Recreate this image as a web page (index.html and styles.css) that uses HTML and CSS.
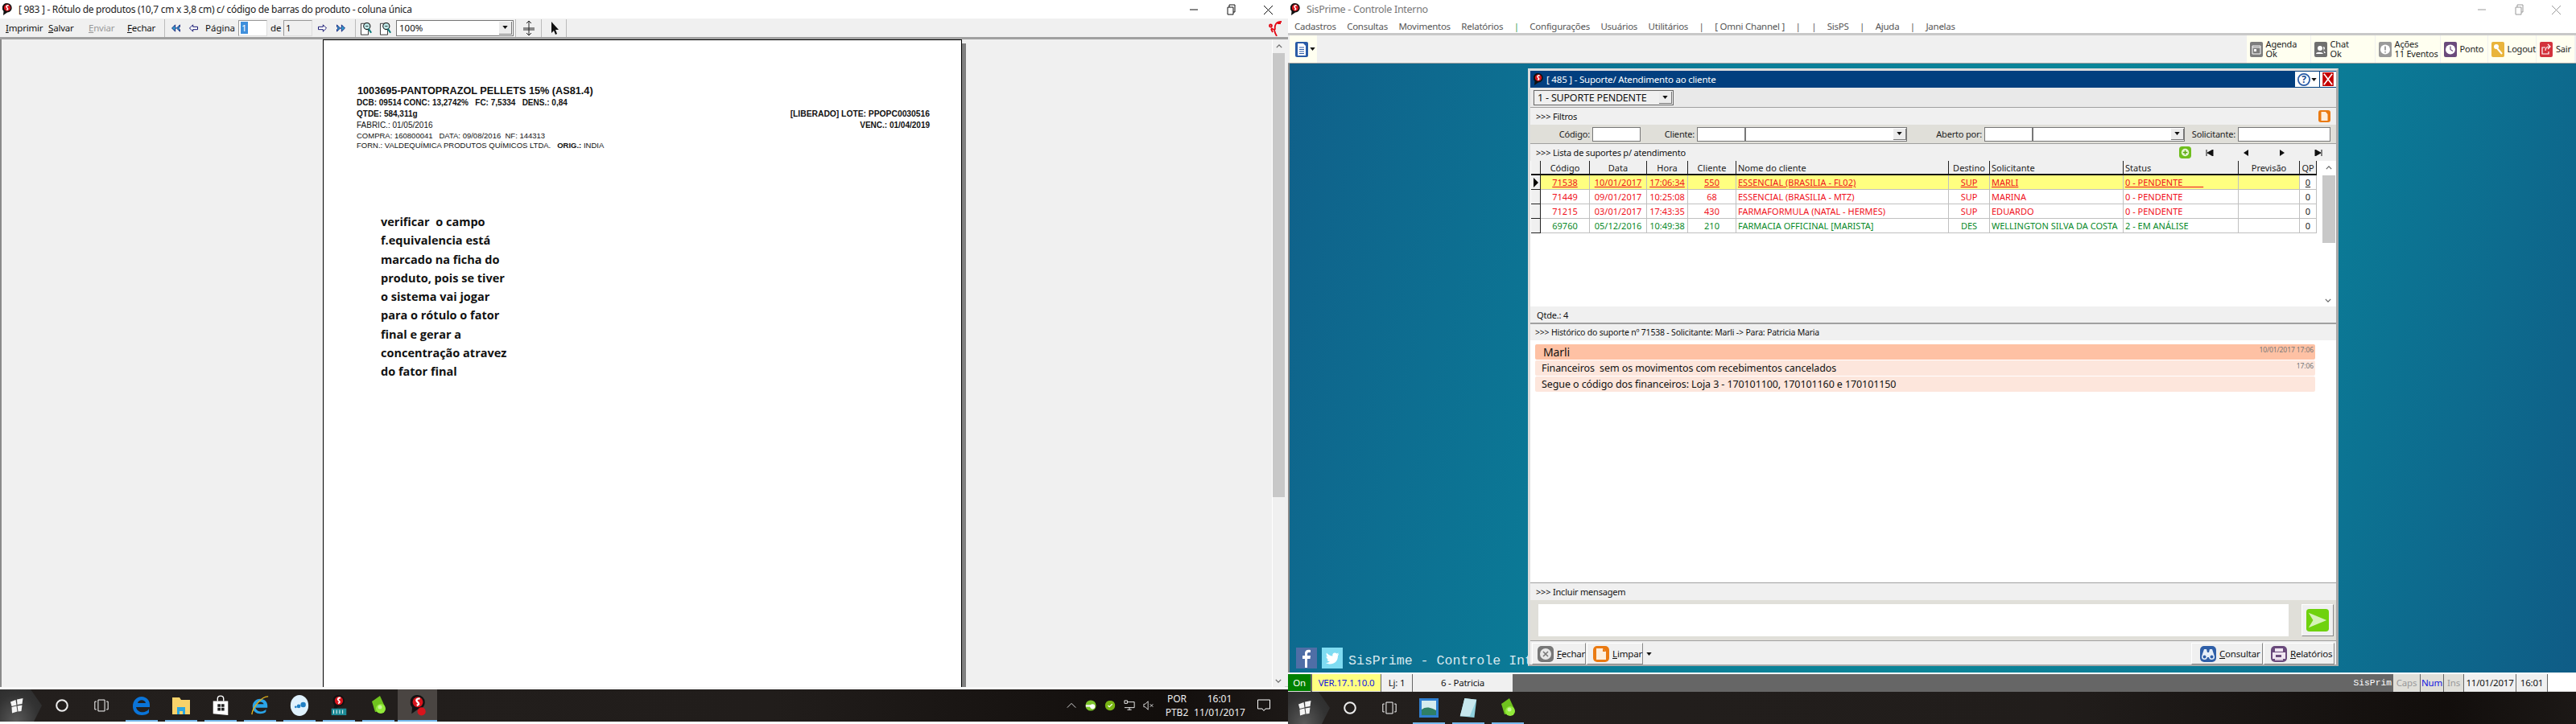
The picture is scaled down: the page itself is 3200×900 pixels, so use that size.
FILE: index.html
```html
<!DOCTYPE html>
<html lang="pt-BR">
<head>
  <meta charset="UTF-8">
  <title>SisPrime - Controle Interno</title>
  <link rel="stylesheet" href="styles.css">
</head>
<body>
  <svg class="sprites" width="0" height="0">
    <symbol id="logo" viewBox="0 0 14 18">
      <path d="M7 0a6.8 6.8 0 0 1 6.8 7c0 4-3 6.600-6.800 6.800L1 18l.6-6A7 7 0 0 1 7 0z" fill="#111"/>
      <circle cx="7" cy="6.800" r="5" fill="#d8141c"/>
      <path d="M9 3.500C6 3 5 5 6.500 6.500S9 9 6 10" fill="none" stroke="#fff" stroke-width="1.800"/>
    </symbol>
    <symbol id="dbl-left" viewBox="0 0 14 12">
      <path d="M6 1 1 6l5 5V8l1-2-1-2zM13 1 8 6l5 5V8l-2-2 2-2z" fill="#39c" stroke="#006" stroke-width=".9"/>
    </symbol>
    <symbol id="one-left" viewBox="0 0 14 12">
      <path d="M6 1 1 6l5 5V8h7V4H6z" fill="#fff" stroke="#006" stroke-width="1.100"/>
    </symbol>
    <symbol id="mag" viewBox="0 0 18 22">
      <path d="M1 4h8l3 3v14H1z" fill="#fff" stroke="#111"/>
      <circle cx="10" cy="8" r="5" fill="#bfe8e8" stroke="#111" stroke-width="1.300"/>
      <path d="M12.500 12l4 6" stroke="#0a7a7a" stroke-width="2.500"/>
      <path d="M8 8h4" stroke="#111"/>
    </symbol>
    <symbol id="tri-down" viewBox="0 0 8 5"><path d="M0 0h8L4 5z" fill="#111"/></symbol>
    <symbol id="win" viewBox="0 0 18 20">
      <path d="M1 5.500 7.500 3l1 6.500-6 1.500zM9 2.500 16.500 1l-1 7-6 1zM2.500 12l6-1.500 1 7L3 19.500zM9.500 10.500l6-1-1 7.500-4 .5z" fill="#f4f4f4"/>
    </symbol>
    <symbol id="cortana" viewBox="0 0 18 18"><circle cx="9" cy="9" r="6.800" fill="none" stroke="#eee" stroke-width="2"/></symbol>
    <symbol id="taskview" viewBox="0 0 22 20">
      <path d="M6 1.500h10v17H6zM3.500 4H1v12h2.500M18.500 4H21v12h-2.500" fill="none" stroke="#fff" stroke-width="1.200"/>
    </symbol>
    <symbol id="stone" viewBox="0 0 20 26">
      <path d="M2 8 12 1l6 13-3 6-9 1z" fill="#6fc21e"/>
      <circle cx="13" cy="17" r="6" fill="#92ea3a"/>
      <circle cx="12" cy="15" r="2.500" fill="#c8f59a"/>
    </symbol>
  </svg>

  <main class="desk">

    <section class="screen">
      <header class="titlebar">
        <svg class="title-logo"><use href="#logo"/></svg>
        <span class="title-text">[ 983 ] - Rótulo de produtos (10,7 cm x 3,8 cm) c/ código de barras do produto - coluna única</span>
        <div class="win-ctrl">
          <svg viewBox="0 0 46 20"><path d="M18 10h10" stroke="#111"/></svg>
          <svg viewBox="0 0 46 20"><path d="M19 7h7v9h-7zM21 7V4h7v9h-2" fill="none" stroke="#111"/></svg>
          <svg viewBox="0 0 46 20"><path d="M18 5l11 11M29 5 18 16" stroke="#111"/></svg>
        </div>
      </header>

      <div class="preview-tools">
        <span class="tool-btn first"><u>I</u>mprimir</span>
        <span class="tool-btn"><u>S</u>alvar</span>
        <span class="tool-btn off"><u>E</u>nviar</span>
        <span class="tool-btn"><u>F</u>echar</span>
        <i class="tool-sep"></i>
        <svg class="ico"><use href="#dbl-left"/></svg>
        <svg class="ico"><use href="#one-left"/></svg>
        <span class="page-label">Página</span>
        <span class="page-input"><b class="sel">1</b></span>
        <span class="page-label">de</span>
        <span class="page-input gray">1</span>
        <svg class="ico flip"><use href="#one-left"/></svg>
        <svg class="ico flip"><use href="#dbl-left"/></svg>
        <i class="tool-sep end"></i>
        <svg class="ico-mag"><use href="#mag"/></svg>
        <svg class="ico-mag"><use href="#mag"/></svg>
        <span class="zoom-select">100%<span class="drop-btn"><svg class="tri"><use href="#tri-down"/></svg></span></span>
        <i class="tool-sep"></i>
        <svg class="ico-tall" viewBox="0 0 16 20"><path d="M8 1v18M1 10h14M1 12h14M5 4l3-3 3 3M5 16l3 3 3-3" fill="none" stroke="#222"/></svg>
        <i class="tool-sep"></i>
        <svg class="ico-tall" viewBox="0 0 16 20"><path d="M4 2v14l3-3 2 5 2-1-2-5h4z" fill="#111"/></svg>
        <i class="tool-sep"></i>
        <svg class="ico-fig" viewBox="0 0 18 20"><path d="M1 7a1.500 1.500 0 1 1 3 0 1.500 1.500 0 1 1-3 0zM3 10l4 2 1 4 2 4M8 12c-1-6 1-10 8-10M11 4h4M3 11l2 4" fill="none" stroke="#e30613" stroke-width="1.800"/></svg>
      </div>

      <div class="preview-body">
        <div class="gutter"></div>
        <article class="sheet">
          <h1 class="lbl-title">1003695-PANTOPRAZOL PELLETS 15% (AS81.4)</h1>
          <div class="lbl-row strong">DCB: 09514 CONC: 13,2742%   FC: 7,5334   DENS.: 0,84</div>
          <div class="lbl-row strong split"><span>QTDE: 584,311g</span><span class="lote">[LIBERADO] LOTE: PPOPC0030516</span></div>
          <div class="lbl-row split"><span>FABRIC.: 01/05/2016</span><b>VENC.: 01/04/2019</b></div>
          <div class="lbl-row small">COMPRA: 160800041   DATA: 09/08/2016  NF: 144313</div>
          <div class="lbl-row small">FORN.: VALDEQUÍMICA PRODUTOS QUÍMICOS LTDA.   <b>ORIG.:</b> INDIA</div>
          <p class="note">verificar  o campo<br>f.equivalencia está<br>marcado na ficha do<br>produto, pois se tiver<br>o sistema vai jogar<br>para o rótulo o fator<br>final e gerar a<br>concentração atravez<br>do fator final</p>
        </article>
        <div class="sheet-shadow"></div>
        <div class="gutter wide"></div>
        <div class="vscroll">
          <svg class="chev" viewBox="0 0 10 6"><path d="M1 5l4-4 4 4" fill="none" stroke="#666" stroke-width="1.500"/></svg>
          <div class="vthumb"></div>
          <svg class="chev bottom" viewBox="0 0 10 6"><path d="M1 1l4 4 4-4" fill="none" stroke="#666" stroke-width="1.500"/></svg>
        </div>
      </div>

      <footer class="taskbar main-bar">
        <div class="start"><svg class="start-logo"><use href="#win"/></svg></div>
        <div class="task sys"><svg class="sys-ico"><use href="#cortana"/></svg></div>
        <div class="task sys wide-sys"><svg class="sys-ico"><use href="#taskview"/></svg></div>
        <div class="task"><svg class="app" viewBox="0 0 24 26"><path d="M21 17c-2 5-14 7-16-2h17c1-8-4-13-10-13C5 2 1 8 1 14c0 8 6 11 11 11 4 0 7-1 9-3zM7 10c1-5 9-5 10 0z" fill="#0a74d8"/></svg></div>
        <div class="task"><svg class="app" viewBox="0 0 24 26"><path d="M1 3h9l2 3h11v18H1z" fill="#f7d26a"/><path d="M7 15h10v9h-3v-4h-4v4H7z" fill="#2aa6e0"/></svg></div>
        <div class="task"><svg class="app" viewBox="0 0 24 28"><path d="M8 8V5c0-5 8-5 8 0v3" fill="none" stroke="#fff" stroke-width="1.500"/><path d="M2 8h20v19l-20-2z" fill="#fff"/><path d="M8 12h4v4H8zM13 12h4v4h-4zM8 17h4v4H8zM13 17h4v4h-4z" fill="#222"/></svg></div>
        <div class="task"><svg class="app" viewBox="0 0 26 28"><path d="M21 19c-2 4-12 5-14-2h16c1-8-4-12-10-12C7 5 3 10 3 15c0 7 5 10 10 10 4 0 7-1 8-3zM8 12c1-4 9-4 10 0z" fill="#2aa4e8"/><path d="M24 2C16 1 3 16 2 26" fill="none" stroke="#e3b21c" stroke-width="1.500"/></svg></div>
        <div class="task"><svg class="app" viewBox="0 0 24 28"><ellipse cx="12" cy="14" rx="12" ry="14" fill="#dff1fd"/><circle cx="7" cy="16" r="1.500" fill="#1f7fc4"/><circle cx="11" cy="15" r="2.500" fill="#1f7fc4"/><circle cx="17" cy="13" r="3.500" fill="#1f7fc4"/></svg></div>
        <div class="task"><svg class="app" viewBox="0 0 24 28"><use href="#logo" width="16" height="20" x="4" y="0"/><rect x="2" y="18" width="20" height="9" fill="#1c8a96"/><path d="M5 20v5M9 20v5M13 20v5M17 20v5" stroke="#fff"/></svg></div>
        <div class="task"><svg class="app"><use href="#stone"/></svg></div>
        <div class="task active"><svg class="app" viewBox="0 0 24 28"><use href="#logo" width="20" height="25" x="2" y="0"/><circle cx="17" cy="22" r="5.500" fill="#d8141c"/></svg></div>
        <div class="tray">
          <svg class="tray-ico" viewBox="0 0 16 16"><path d="M2 11l6-6 6 6" fill="none" stroke="#eee"/></svg>
          <svg class="tray-ico" viewBox="0 0 16 16"><circle cx="8" cy="8" r="7.500" fill="#7cc42a"/><path d="M1 7h9v3H1z" fill="#eee"/><circle cx="10.500" cy="9.500" r="3.500" fill="#fff"/></svg>
          <svg class="tray-ico" viewBox="0 0 16 16"><path d="M8 1c5 0 7 3 7 7s-3 7-7 7-7-3-7-7 2-7 7-7z" fill="#78b414"/><path d="M5 8l2 2 4-4" fill="none" stroke="#fff" stroke-width="1.300"/></svg>
          <svg class="tray-ico" viewBox="0 0 16 16"><path d="M5 3h10v8H1M8 11v3M5 14h6M1 1h4v4H1z" fill="none" stroke="#fff"/></svg>
          <svg class="tray-ico" viewBox="0 0 16 16"><path d="M1 6h2l4-4v12l-4-4H1zM10 6l4 4M14 6l-4 4" fill="none" stroke="#eee"/></svg>
          <div class="tray-lang">POR<br>PTB2</div>
          <div class="tray-clock">16:01<br>11/01/2017</div>
          <svg class="tray-note" viewBox="0 0 16 16"><path d="M.5 1h15v11H10l-2 2.500L6 12H.5z" fill="none" stroke="#fff"/></svg>
        </div>
      </footer>
    </section>

    <section class="screen">
      <header class="titlebar">
        <svg class="title-logo"><use href="#logo"/></svg>
        <span class="title-text dim">SisPrime - Controle Interno</span>
        <div class="win-ctrl dim-ctrl">
          <svg viewBox="0 0 46 20"><path d="M18 10h10" stroke="#999"/></svg>
          <svg viewBox="0 0 46 20"><path d="M19 7h7v9h-7zM21 7V4h7v9h-2" fill="none" stroke="#999"/></svg>
          <svg viewBox="0 0 46 20"><path d="M18 5l11 11M29 5 18 16" stroke="#999"/></svg>
        </div>
      </header>
      <nav class="menubar">
        <span>Cadastros</span><span>Consultas</span><span>Movimentos</span><span>Relatórios</span><span class="green">|</span><span>Configurações</span><span>Usuários</span><span>Utilitários</span><span>|</span><span>[ Omni Channel ]</span><span>|</span><span>|</span><span>SisPS</span><span>|</span><span>Ajuda</span><span>|</span><span>Janelas</span>
      </nav>
      <div class="quickbar">
        <div class="doc-btn">
          <svg class="doc-ico" viewBox="0 0 16 19"><rect width="16" height="19" rx="2" fill="#2a5ba6"/><path d="M3 2h7l3 3v12H3z" fill="#fff"/><path d="M5 7h6M5 9.500h6M5 12h6M5 14.500h6" stroke="#2a5ba6"/></svg>
          <svg class="tri"><use href="#tri-down"/></svg>
        </div>
        <div class="quick agenda">
          <svg class="metro" viewBox="0 0 16 19"><rect width="16" height="19" rx="2" fill="#7d7d7d"/><path d="M3 5h10v10H3zM3 7h10" fill="none" stroke="#fff"/><path d="M5 9h3v3H5z" fill="#fff"/></svg>
          <span>Agenda<br>Ok</span>
        </div>
        <div class="quick chat">
          <svg class="metro" viewBox="0 0 16 19"><rect width="16" height="19" rx="2" fill="#6f6f6f"/><circle cx="7" cy="8" r="3" fill="#fff"/><path d="M2 15c0-3 8-3 9 0zM11 6a2 2 0 0 1 0 4l3 4h-2z" fill="#fff"/></svg>
          <span>Chat<br>Ok</span>
        </div>
        <div class="quick acoes">
          <svg class="metro" viewBox="0 0 16 19"><rect width="16" height="19" rx="2" fill="#9a9a9a"/><circle cx="8" cy="9.500" r="6" fill="#fff"/><path d="M8 5.500v5M8 12v1.500" stroke="#9a9a9a" stroke-width="1.800"/></svg>
          <span>Ações<br>11 Eventos</span>
        </div>
        <div class="quick ponto">
          <svg class="metro" viewBox="0 0 16 19"><rect width="16" height="19" rx="2" fill="#6a4a7c"/><circle cx="8" cy="9.500" r="6" fill="#fff"/><path d="M8 5.500v4l3 2" fill="none" stroke="#6a4a7c" stroke-width="1.200"/></svg>
          <span>Ponto</span>
        </div>
        <div class="quick logout">
          <svg class="metro" viewBox="0 0 16 19"><rect width="16" height="19" rx="2" fill="#e9b43c"/><circle cx="6" cy="6" r="3" fill="#fff"/><path d="M7 8l6 7" stroke="#fff" stroke-width="2"/></svg>
          <span>Logout</span>
        </div>
        <div class="quick sair">
          <svg class="metro" viewBox="0 0 16 19"><rect width="16" height="19" rx="2" fill="#d3333c"/><path d="M11 12v3H3V7h4M7 11c0-3 2-5 5-5M10 3l3 3-3 3" fill="none" stroke="#fff" stroke-width="1.200"/></svg>
          <span>Sair</span>
        </div>
      </div>

      <div class="workspace">
        <div class="social">
          <svg class="soc" viewBox="0 0 26 26"><rect width="26" height="26" fill="#4f6ea6"/><path d="M11 25V14H8v-4h3V7c0-3 2-5 7-4v3h-2c-1 0-2 .5-2 2v2h4l-.5 4H14v11z" fill="#fff"/></svg>
          <svg class="soc" viewBox="0 0 26 26"><rect width="26" height="26" fill="#7fdcf2"/><path d="M21 8c-1 .5-1.500.5-2 .5 1-.5 1.500-1 2-2-1 .5-1.500.7-2.500 1-2-2-6-.5-5 3-3 0-6-2-7.500-4-1 2 0 4 1.500 5-.7 0-1.200-.2-2-.5 0 2 1.500 3.500 3 4h-2c.5 1.500 2 2.500 3.500 2.500C8 18.500 6.500 19 5 19c6 3.500 15 1 15-9 .5-.5 1-1 1-2z" fill="#fff"/></svg>
          <span class="marquee">SisPrime - Controle Interno</span>
        </div>

        <section class="support">
          <div class="sup-title">
            <svg class="sup-logo"><use href="#logo"/></svg>
            <span>[ 485 ] - Suporte/ Atendimento ao cliente</span>
            <div class="sup-help">
              <svg class="help-ico" viewBox="0 0 18 18"><circle cx="9" cy="9" r="8" fill="#fff" stroke="#2a5ba6" stroke-width="2"/></svg>
              <b class="help-mark">?</b>
              <svg class="tri"><use href="#tri-down"/></svg>
            </div>
            <div class="sup-close"><svg viewBox="0 0 16 20"><rect width="16" height="20" fill="#c40000"/><path d="M2 2l12 16M14 2 2 18" stroke="#fff" stroke-width="2"/></svg></div>
          </div>

          <div class="combo-row">
            <div class="status-combo">1 - SUPORTE PENDENTE<span class="drop-btn"><svg class="tri"><use href="#tri-down"/></svg></span></div>
          </div>

          <div class="caption rule">
            <span>&gt;&gt;&gt; Filtros</span>
            <svg class="clip" viewBox="0 0 15 15"><rect width="15" height="15" rx="3" fill="#ea7a12"/><path d="M3.500 2H9l2.500 3v8h-8z" fill="#fdeedd"/></svg>
          </div>
          <div class="filters">
            <label>Código:</label><span class="field"></span>
            <label>Cliente:</label><span class="field"></span><span class="field drop"><span class="drop-btn"><svg class="tri"><use href="#tri-down"/></svg></span></span>
            <label>Aberto por:</label><span class="field"></span><span class="field drop"><span class="drop-btn"><svg class="tri"><use href="#tri-down"/></svg></span></span>
            <label>Solicitante:</label><span class="field"></span>
          </div>
          <div class="caption list-cap">
            <span>&gt;&gt;&gt; Lista de suportes p/ atendimento</span>
            <div class="pager">
              <svg class="plus" viewBox="0 0 16 16"><rect width="16" height="16" rx="4" fill="#6fbe1e"/><circle cx="8" cy="8" r="5" fill="#e8f6d8"/><path d="M8 5v6M5 8h6" stroke="#5aa510" stroke-width="1.500"/></svg>
              <svg class="nav" viewBox="0 0 10 8"><path d="M1 0v8M9 0v8L2 4z" stroke="#111" fill="#111"/></svg>
              <svg class="nav" viewBox="0 0 10 8"><path d="M8 0v8L2 4z" fill="#111"/></svg>
              <svg class="nav" viewBox="0 0 10 8"><path d="M2 0v8l6-4z" fill="#111"/></svg>
              <svg class="nav" viewBox="0 0 10 8"><path d="M9 0v8M1 0v8l7-4z" stroke="#111" fill="#111"/></svg>
            </div>
          </div>

          <div class="grid-wrap">
            <table class="grid">
              <colgroup>
                <col class="c-ind"><col class="c-cod"><col class="c-data"><col class="c-hora"><col class="c-cli"><col class="c-nome"><col class="c-dest"><col class="c-sol"><col class="c-stat"><col class="c-prev"><col class="c-qp">
              </colgroup>
              <thead>
                <tr><th></th><th>Código</th><th>Data</th><th>Hora</th><th>Cliente</th><th class="lft">Nome do cliente</th><th>Destino</th><th class="lft">Solicitante</th><th class="lft">Status</th><th>Previsão</th><th>QP</th></tr>
              </thead>
              <tbody>
                <tr class="red cur"><td class="ind"><span class="marker"></span></td><td><u>71538</u></td><td><u>10/01/2017</u></td><td><u>17:06:34</u></td><td><u>550</u></td><td class="lft"><u>ESSENCIAL (BRASILIA - FL02)</u></td><td><u>SUP</u></td><td class="lft"><u>MARLI</u></td><td class="lft"><u>0 - PENDENTE&nbsp;&nbsp;&nbsp;&nbsp;&nbsp;&nbsp;&nbsp;&nbsp;&nbsp;</u></td><td></td><td class="qp"><u>0</u></td></tr>
                <tr class="red"><td class="ind"></td><td>71449</td><td>09/01/2017</td><td>10:25:08</td><td>68</td><td class="lft">ESSENCIAL (BRASILIA - MTZ)</td><td>SUP</td><td class="lft">MARINA</td><td class="lft">0 - PENDENTE</td><td></td><td class="qp">0</td></tr>
                <tr class="red"><td class="ind"></td><td>71215</td><td>03/01/2017</td><td>17:43:35</td><td>430</td><td class="lft">FARMAFORMULA (NATAL - HERMES)</td><td>SUP</td><td class="lft">EDUARDO</td><td class="lft">0 - PENDENTE</td><td></td><td class="qp">0</td></tr>
                <tr class="grn"><td class="ind"></td><td>69760</td><td>05/12/2016</td><td>10:49:38</td><td>210</td><td class="lft">FARMACIA OFFICINAL [MARISTA]</td><td>DES</td><td class="lft">WELLINGTON SILVA DA COSTA</td><td class="lft">2 - EM ANÁLISE</td><td></td><td class="qp">0</td></tr>
              </tbody>
            </table>
            <div class="grid-scroll">
              <svg class="chev" viewBox="0 0 10 6"><path d="M1 5l4-4 4 4" fill="none" stroke="#666" stroke-width="1.500"/></svg>
              <div class="grid-thumb"></div>
              <svg class="chev bottom" viewBox="0 0 10 6"><path d="M1 1l4 4 4-4" fill="none" stroke="#666" stroke-width="1.500"/></svg>
            </div>
          </div>
          <div class="qtde">Qtde.: 4</div>

          <div class="caption hist-cap">&gt;&gt;&gt; Histórico do suporte nº 71538 - Solicitante: Marli -&gt; Para: Patricia Maria</div>
          <div class="history">
            <div class="bubble head"><span>Marli</span><time>10/01/2017 17:06</time></div>
            <div class="bubble"><span>Financeiros  sem os movimentos com recebimentos cancelados</span><time>17:06</time></div>
            <div class="bubble"><span>Segue o código dos financeiros: Loja 3 - 170101100, 170101160 e 170101150</span></div>
          </div>

          <div class="caption inc-cap">&gt;&gt;&gt; Incluir mensagem</div>
          <div class="compose">
            <div class="compose-box"></div>
            <div class="send"><svg viewBox="0 0 30 30"><rect width="30" height="30" rx="4" fill="#6fd20e"/><path d="M3 5l24 10-24 10 6-10z" fill="#d5f2b8"/></svg></div>
          </div>
          <div class="actions">
            <div class="act fechar">
              <svg class="act-ico" viewBox="0 0 20 20"><rect width="20" height="20" rx="5" fill="#777"/><circle cx="10" cy="10" r="7" fill="#e8e8e8"/><path d="M7 7l6 6M13 7l-6 6" stroke="#777" stroke-width="1.500"/></svg>
              <span><u>F</u>echar</span>
            </div>
            <div class="act limpar">
              <svg class="act-ico" viewBox="0 0 20 20"><rect width="20" height="20" rx="5" fill="#ea7a12"/><path d="M4 3h8l4 4v10H4z" fill="#fdeedd"/><path d="M12 3v4h4z" fill="#ea7a12"/></svg>
              <span><u>L</u>impar</span>
            </div>
            <div class="act-drop"><svg class="tri"><use href="#tri-down"/></svg></div>
            <div class="act-gap"></div>
            <div class="act consultar">
              <svg class="act-ico" viewBox="0 0 20 20"><rect width="20" height="20" rx="5" fill="#2f5fa8"/><path d="M5 4h3l1 4h2l1-4h3l3 9a3.500 3.500 0 0 1-7 1H9a3.500 3.500 0 0 1-7-1z" fill="#e6eef8"/><circle cx="5.500" cy="13.500" r="2" fill="#2f5fa8"/><circle cx="14.500" cy="13.500" r="2" fill="#2f5fa8"/></svg>
              <span><u>C</u>onsultar</span>
            </div>
            <div class="act relatorios">
              <svg class="act-ico" viewBox="0 0 20 20"><rect width="20" height="20" rx="5" fill="#6a4a7c"/><path d="M5 3h10v4H5zM2 8h16v8H2z" fill="#f0e6f2"/><path d="M6 11h7v3H6z" fill="#6a4a7c"/><path d="M5 16h10v2H5z" fill="#d9c8dd"/></svg>
              <span><u>R</u>elatórios</span>
            </div>
          </div>
        </section>
      </div>

      <div class="statusbar">
        <span class="st st-on">On</span>
        <span class="st st-ver">VER.17.1.10.0</span>
        <span class="st st-lj">Lj: 1</span>
        <span class="st st-user">6 - Patricia</span>
        <span class="st-brand"><span>SisPrim</span></span>
        <span class="st st-key off">Caps</span>
        <span class="st st-num">Num</span>
        <span class="st st-ins off">Ins</span>
        <span class="st st-date">11/01/2017</span>
        <span class="st st-time">16:01</span>
        <span class="st st-blank"></span>
      </div>

      <footer class="taskbar">
        <div class="start"><svg class="start-logo"><use href="#win"/></svg></div>
        <div class="task sys"><svg class="sys-ico"><use href="#cortana"/></svg></div>
        <div class="task sys"><svg class="sys-ico"><use href="#taskview"/></svg></div>
        <div class="task"><svg class="app" viewBox="0 0 24 24"><rect width="24" height="24" fill="#2f7fd0"/><rect x="3" y="3" width="18" height="18" fill="#d5ecef"/><path d="M3 14c5-4 11-3 18 1v6H3z" fill="#2f7f66"/></svg></div>
        <div class="task"><svg class="app" viewBox="0 0 24 28"><path d="M7 1l16 2-3 24L1 25z" fill="#8fd0dd"/><path d="M7 1l16 2-9 22-13 0z" fill="#c8e8ee"/></svg></div>
        <div class="task"><svg class="app"><use href="#stone"/></svg></div>
      </footer>
    </section>

  </main>
</body>
</html>
```

FILE: styles.css
```css
* {
  box-sizing: border-box;
}
html, body {
  margin: 0;
  padding: 0;
}
body {
  width: 3200px;
  height: 900px;
  overflow: hidden;
  background: #201c1a;
  font-family: "Noto Sans", "Liberation Sans", sans-serif;
  font-size: 11px;
  color: #111;
}
.sprites {
  position: absolute;
}
.desk {
  display: flex;
  width: 3200px;
  height: 900px;
}
.screen {
  display: flex;
  flex-direction: column;
  width: 1600px;
  height: 900px;
  background: #fff;
}

/* window title */
.titlebar {
  display: flex;
  align-items: center;
  flex: 0 0 23px;
  padding-left: 3px;
  background: #fff;
}
.title-logo {
  width: 12px;
  height: 15px;
}
.title-text {
  margin-left: 8px;
  font-size: 12px;
  letter-spacing: -0.3px;
  color: #222;
}
.title-text.dim {
  color: #777;
  font-size: 12.500px;
}
.win-ctrl {
  display: flex;
  margin-left: auto;
  padding-right: 2px;
}
.win-ctrl svg {
  width: 46px;
  height: 20px;
}

/* report preview toolbar */
.preview-tools {
  display: grid;
  grid-template-columns: 60px 50px 48px 46px 2px 24px 21px 45px 36px 20px 36px 24px 22px 8px 26px 22px 150px 2px 30px 2px 29px 2px 1fr;
  align-items: center;
  flex: 0 0 23px;
  background: #f0f0f0;
}
.tool-btn {
  font-size: 11.500px;
  letter-spacing: -0.2px;
}
.tool-btn.first {
  padding-left: 7px;
}
.tool-btn.off {
  color: #999;
}
.tool-sep {
  width: 1px;
  height: 22px;
  background: #bbb;
}
.tool-sep.end {
  justify-self: end;
}
.ico {
  width: 13px;
  height: 10px;
  justify-self: center;
}
.ico.flip {
  transform: scaleX(-1);
}
.ico-mag {
  width: 16px;
  height: 18px;
  justify-self: center;
}
.ico-tall {
  width: 16px;
  height: 20px;
  justify-self: center;
}
.ico-fig {
  justify-self: end;
  width: 18px;
  height: 20px;
  margin-right: 6px;
}
.page-label {
  padding-left: 4px;
  font-size: 11.500px;
}
.page-input {
  display: flex;
  align-items: center;
  height: 20px;
  padding-left: 2px;
  background: #fff;
  border: 1px solid #999;
  border-right-color: #ddd;
  border-bottom-color: #ddd;
  font-size: 11.500px;
}
.page-input.gray {
  background: #f0f0f0;
}
.sel {
  padding: 0 1px;
  background: #3f8fdc;
  color: #fff;
  font-weight: 400;
}
.zoom-select {
  position: relative;
  display: flex;
  align-items: center;
  width: 146px;
  height: 20px;
  margin-left: 2px;
  padding-left: 3px;
  background: #fff;
  border: 1px solid #777;
  font-size: 11.500px;
}
.drop-btn {
  position: absolute;
  top: 1px;
  right: 1px;
  bottom: 1px;
  display: flex;
  align-items: center;
  justify-content: center;
  width: 16px;
  background: #ececec;
  border-right: 1px solid #777;
  border-bottom: 1px solid #777;
}
.tri {
  width: 7px;
  height: 4px;
}

/* report sheet */
.preview-body {
  display: flex;
  flex: 0 0 811px;
  background: #f0f0f0;
  border-top: 3px solid #a0a0a0;
  border-bottom: 3px solid #f8f8f8;
  box-shadow: inset 0 -1px 0 #ccc;
}
.gutter {
  flex: 0 0 401px;
  background: #f0f0f0;
  border-left: 2px solid #8a8a8a;
}
.gutter.wide {
  flex: 0 0 380px;
  border-left: 0;
}
.sheet {
  flex: 0 0 794px;
  padding: 55px 39px 0 41px;
  background: #fff;
  border-top: 1px solid #000;
  border-left: 1px solid #000;
  border-right: 1px solid #000;
  font-family: "Liberation Sans", Arial, sans-serif;
  color: #111;
}
.sheet-shadow {
  flex: 0 0 5px;
  margin-top: 5px;
  background: #808080;
}
.lbl-title {
  margin: 0 0 0 1px;
  height: 16px;
  font-size: 12.700px;
  line-height: 16px;
  font-weight: 700;
}
.lbl-row {
  height: 14px;
  font-size: 10px;
  line-height: 14px;
  white-space: pre;
}
.lbl-row.strong {
  font-weight: 700;
}
.lbl-row.small {
  height: 12px;
  font-size: 9.500px;
  line-height: 12px;
}
.lote {
  font-size: 10.300px;
}
.split {
  display: flex;
  justify-content: space-between;
}
.note {
  margin: 77px 0 0 30px;
  font-family: "Open Sans", sans-serif;
  font-size: 14.500px;
  font-weight: 700;
  line-height: 23.300px;
  white-space: pre;
  color: #111;
}
.vscroll {
  position: relative;
  flex: 0 0 16px;
  background: #f0f0f0;
  border-left: 1px solid #fff;
}
.chev {
  display: block;
  width: 8px;
  height: 5px;
  margin: 6px auto 0;
}
.chev.bottom {
  position: absolute;
  left: 3px;
  bottom: 5px;
  margin: 0;
}
.vthumb {
  height: 552px;
  margin-top: 6px;
  background: #c8c8c8;
}

/* taskbar */
.taskbar {
  display: flex;
  flex: 0 0 40px;
  background: linear-gradient(90deg, #231f1d 0%, #211d1b 60%, #120e0c 90%, #1c1816 100%);
}
.start {
  flex: 0 0 52px;
  display: flex;
  align-items: center;
  justify-content: center;
  padding-right: 10px;
  background: radial-gradient(ellipse at 20px 40px, #5a5a5a, #333 60%, #2a2a2a);
  clip-path: polygon(0 0, 38px 0, 52px 50%, 42px 100%, 0 100%);
}
.start-logo {
  width: 18px;
  height: 20px;
}
.task {
  position: relative;
  display: flex;
  align-items: center;
  justify-content: center;
  flex: 0 0 49px;
}
.task::after {
  content: "";
  position: absolute;
  left: 5px;
  right: 4px;
  bottom: 0;
  height: 2px;
  background: #76b9ed;
}
.task.sys {
  flex: 0 0 49px;
}
.task.sys::after {
  display: none;
}
.wide-sys {
  margin-right: 1px;
}
.task.active {
  background: #4a4542;
}
.task.active::after {
  left: 0;
  right: 0;
}
.sys-ico {
  width: 18px;
  height: 20px;
}
.app {
  width: 24px;
  height: 26px;
}
.tray {
  display: flex;
  align-items: center;
  margin-left: 776px;
  color: #eee;
  font-size: 12px;
}
.tray-ico {
  flex: 0 0 14px;
  width: 14px;
  height: 14px;
  margin: 0 5px;
}
.tray-lang {
  flex: 0 0 36px;
  margin-left: 5px;
  text-align: center;
  line-height: 17px;
}
.tray-clock {
  flex: 0 0 66px;
  margin-left: 2px;
  text-align: center;
  line-height: 17px;
}
.tray-note {
  width: 16px;
  height: 16px;
  margin-left: 14px;
}

/* main app menus */
.menubar {
  display: flex;
  align-items: center;
  gap: 13.500px;
  flex: 0 0 18px;
  padding-left: 8px;
  background: #fff;
  font-size: 11.500px;
  letter-spacing: -0.25px;
  color: #555;
}
.menubar .green {
  color: #3a9a5a;
}
.quickbar {
  display: flex;
  flex: 0 0 38px;
  gap: 1px;
  padding: 0 2px 0 2px;
  background: #f0f0f0;
  border-top: 3px solid #c8c8c8;
  border-bottom: 1px solid #a0a0a0;
}
.doc-btn {
  display: flex;
  align-items: center;
  gap: 2px;
  flex: 0 0 34px;
  margin-right: auto;
  padding-left: 7px;
  background: #fffff0;
}
.doc-ico {
  width: 16px;
  height: 19px;
}
.quick {
  display: flex;
  align-items: center;
  gap: 4px;
  padding-left: 4px;
  background: #fffff0;
  line-height: 12px;
  color: #222;
  letter-spacing: -0.2px;
}
.agenda, .chat {
  flex: 0 0 79px;
}
.acoes {
  flex: 0 0 80px;
}
.ponto {
  flex: 0 0 58px;
}
.logout {
  flex: 0 0 59px;
}
.sair {
  flex: 0 0 47px;
}
.metro {
  flex: 0 0 16px;
  width: 16px;
  height: 19px;
}

/* desktop */
.workspace {
  position: relative;
  flex: 0 0 757px;
  padding: 6px 0 0 296px;
  background: linear-gradient(105deg, #10608a 0%, #0a7d98 30%, #0a8598 55%, #0b7a96 75%, #0f5c86 100%);
  border-left: 2px solid #8a8a8a;
}
.social {
  position: absolute;
  left: 8px;
  bottom: 5px;
  display: flex;
  align-items: flex-end;
  gap: 6px;
}
.soc {
  width: 26px;
  height: 26px;
}
.marquee {
  margin-left: 1px;
  font-family: "Liberation Mono", monospace;
  font-size: 16.600px;
  line-height: 18px;
  color: #d8e8ee;
  white-space: nowrap;
}

/* support window */
.support {
  position: relative;
  display: flex;
  flex-direction: column;
  width: 1007px;
  height: 743px;
  background: #f0f0f0;
  border: 3px solid #dcdcdc;
  border-right-color: #a8a8a8;
  border-bottom-color: #a8a8a8;
}
.sup-title {
  display: flex;
  align-items: center;
  flex: 0 0 21px;
  padding-left: 4px;
  background: #023f7f;
  color: #fff;
  font-size: 11.500px;
  letter-spacing: -0.2px;
}
.sup-logo {
  width: 12px;
  height: 15px;
  margin-right: 4px;
}
.sup-help {
  position: relative;
  display: flex;
  align-items: center;
  gap: 1px;
  height: 19px;
  margin-left: auto;
  padding: 0 3px 0 3px;
  background: #fff;
}
.help-ico {
  width: 16px;
  height: 16px;
}
.help-mark {
  position: absolute;
  left: 3px;
  width: 16px;
  color: #1e4f96;
  text-align: center;
  font-size: 12px;
}
.sup-close {
  width: 20px;
  height: 19px;
  margin-left: 1px;
  padding: 1px 1px 1px 2px;
  background: #fff;
}
.sup-close svg {
  display: block;
  width: 16px;
  height: 17px;
}
.combo-row {
  flex: 0 0 25px;
  padding: 3px 0 0 4px;
  background: #e9e9e9;
  border-bottom: 1px solid #a0a0a0;
}
.status-combo {
  position: relative;
  display: flex;
  align-items: center;
  width: 174px;
  height: 19px;
  padding-left: 4px;
  background: #f0f0f0;
  border: 1px solid #666;
  font-size: 12.500px;
  letter-spacing: -0.2px;
}
.caption {
  display: flex;
  align-items: center;
  justify-content: space-between;
  padding: 0 7px;
  background: #f0f0f0;
  letter-spacing: -0.2px;
}
.caption.rule {
  flex: 0 0 21px;
}
.clip {
  width: 15px;
  height: 15px;
}
.list-cap {
  flex: 0 0 22px;
  border-top: 1px solid #a0a0a0;
  padding-right: 0;
}
.pager {
  display: grid;
  grid-template-columns: 16px 45px 45px 45px 45px;
  align-items: center;
  justify-items: center;
  width: 196px;
  padding-right: 0;
}
.plus {
  width: 15px;
  height: 15px;
}
.nav {
  width: 10px;
  height: 8px;
}
.filters {
  display: grid;
  grid-template-columns: 77px 60px 70px 60px 201px 96px 60px 189px 66px 115px;
  align-items: center;
  flex: 0 0 23px;
  background: #e0dfd9;
  letter-spacing: -0.2px;
  color: #222;
}
.filters label {
  padding-right: 3px;
  text-align: right;
}
.field {
  position: relative;
  display: block;
  height: 18px;
  background: #fff;
  border: 1px solid #777;
}
.field.drop {
  margin-left: 0;
  width: 100%;
}
.field .drop-btn {
  right: 0;
}

/* list */
.grid-wrap {
  display: flex;
  align-items: flex-start;
  flex: 0 0 181px;
  padding-left: 1px;
  background: #fff;
}
.grid {
  flex: 0 0 976px;
  width: 976px;
  table-layout: fixed;
  border-collapse: separate;
  border-spacing: 0;
  font-size: 11px;
}
.c-ind { width: 12px; }
.c-cod { width: 61px; }
.c-data { width: 71px; }
.c-hora { width: 51px; }
.c-cli { width: 60px; }
.c-nome { width: 264px; }
.c-dest { width: 51px; }
.c-sol { width: 166px; }
.c-stat { width: 143px; }
.c-prev { width: 76px; }
.c-qp { width: 21px; }
.grid th {
  height: 18px;
  padding: 0;
  background: #f0f0f0;
  border-right: 1px solid #222;
  border-bottom: 2px solid #111;
  font-weight: 400;
  color: #222;
}
.grid td {
  height: 18px;
  padding: 0;
  text-align: center;
  border-right: 1px solid #c0c0c0;
  border-bottom: 1px solid #c0c0c0;
  white-space: nowrap;
  overflow: hidden;
}
.grid .lft {
  padding-left: 2px;
  text-align: left;
}
.grid td.ind {
  background: #f0f0f0;
  border-right: 1px solid #222;
  border-bottom: 1px solid #222;
}
.marker {
  display: block;
  width: 0;
  height: 0;
  margin-left: 3px;
  border-left: 6px solid #000;
  border-top: 6px solid transparent;
  border-bottom: 6px solid transparent;
}
.red td {
  color: #f01020;
}
.grn td {
  color: #0a8a2a;
}
.cur td {
  background: #ffff80;
}
.grid td.qp {
  background: #fff;
  color: #222;
}
.grid-scroll {
  position: relative;
  flex: 0 0 16px;
  align-self: stretch;
  margin-left: 7px;
  background: #fff;
}
.grid-thumb {
  height: 84px;
  margin-top: 7px;
  background: #c8c8c8;
}
.qtde {
  display: flex;
  align-items: center;
  flex: 0 0 20px;
  padding-left: 8px;
  background: #f0f0f0;
  letter-spacing: -0.2px;
}
.hist-cap {
  flex: 0 0 22px;
  border-top: 2px solid #a0a0a0;
  justify-content: flex-start;
  padding-left: 6px;
  font-size: 10.500px;
}
.history {
  flex: 0 0 301px;
  padding: 5px 0 0 6px;
  background: #fff;
}
.bubble {
  display: flex;
  justify-content: space-between;
  width: 969px;
  height: 19px;
  margin-bottom: 1px;
  padding: 0 2px 0 8px;
  background: #fde6dc;
  border-radius: 2px;
  font-size: 12.500px;
  line-height: 20px;
  white-space: pre;
  letter-spacing: -0.1px;
}
.bubble time {
  font-size: 8.500px;
  line-height: 14px;
  color: #777;
}
.bubble.head {
  margin-top: 0;
  background: #fec1a4;
  font-size: 14px;
  padding-left: 10px;
}
.inc-cap {
  flex: 0 0 22px;
  border-top: 1px solid #a0a0a0;
  justify-content: flex-start;
}
.compose {
  display: flex;
  flex: 0 0 50px;
  padding: 5px 0 0 10px;
  background: #e0dfd9;
}
.compose-box {
  width: 932px;
  height: 40px;
  background: #fff;
}
.send {
  width: 40px;
  height: 40px;
  margin-left: 16px;
  padding: 5px;
  background: #f0f0f0;
  border: 1px solid #fff;
  border-right-color: #888;
  border-bottom-color: #888;
}
.send svg {
  display: block;
  width: 28px;
  height: 28px;
}
.actions {
  display: flex;
  flex: 1;
  gap: 1px;
  padding: 2px 2px 0 2px;
  background: #f0f0f0;
  border-top: 1px solid #a0a0a0;
}
.act {
  display: flex;
  align-items: center;
  gap: 4px;
  height: 27px;
  padding-left: 6px;
  background: #f0f0f0;
  border: 1px solid #fff;
  border-right-color: #888;
  border-bottom-color: #888;
  letter-spacing: -0.2px;
  font-size: 11.500px;
}
.act-ico {
  flex: 0 0 20px;
  width: 20px;
  height: 20px;
}
.fechar { flex: 0 0 67px; }
.limpar { flex: 0 0 69px; padding-left: 7px; }
.consultar { flex: 0 0 89px; padding-left: 10px; }
.relatorios { flex: 0 0 88px; padding-left: 8px; }
.act-drop {
  display: flex;
  align-items: center;
  padding-left: 3px;
  height: 27px;
}
.act-gap {
  flex: 1;
}

/* status line */
.statusbar {
  display: flex;
  flex: 0 0 24px;
  gap: 1px;
  background: #666;
  border-top: 2px solid #fff;
  text-align: center;
  letter-spacing: -0.2px;
}
.st {
  display: flex;
  align-items: center;
  justify-content: center;
  background: #f0f0f0;
  border-bottom: 1px solid #ddd;
  font-size: 11.500px;
}
.st-on { flex: 0 0 28px; background: #008000; color: #fff; }
.st-ver { flex: 0 0 85px; margin-left: 1px; background: #ffff80; color: #1414e0; }
.st-lj { flex: 0 0 38px; }
.st-user { flex: 0 0 124px; }
.st-brand {
  flex: 1;
  display: flex;
  align-items: center;
  justify-content: flex-end;
  padding-right: 2px;
  font-family: "Liberation Mono", monospace;
  font-size: 11.300px;
  letter-spacing: 0;
  color: #fff;
}
.st-key { flex: 0 0 33px; margin-left: -1px; background: #e0dfd9; }
.st-num { flex: 0 0 28px; background: #e0dfd9; color: #1414e0; }
.st-ins { flex: 0 0 24px; background: #e0dfd9; }
.st-date { flex: 0 0 64px; }
.st-time { flex: 0 0 38px; }
.st-blank { flex: 0 0 35px; background: #fff; }
.off { color: #999; }
```
